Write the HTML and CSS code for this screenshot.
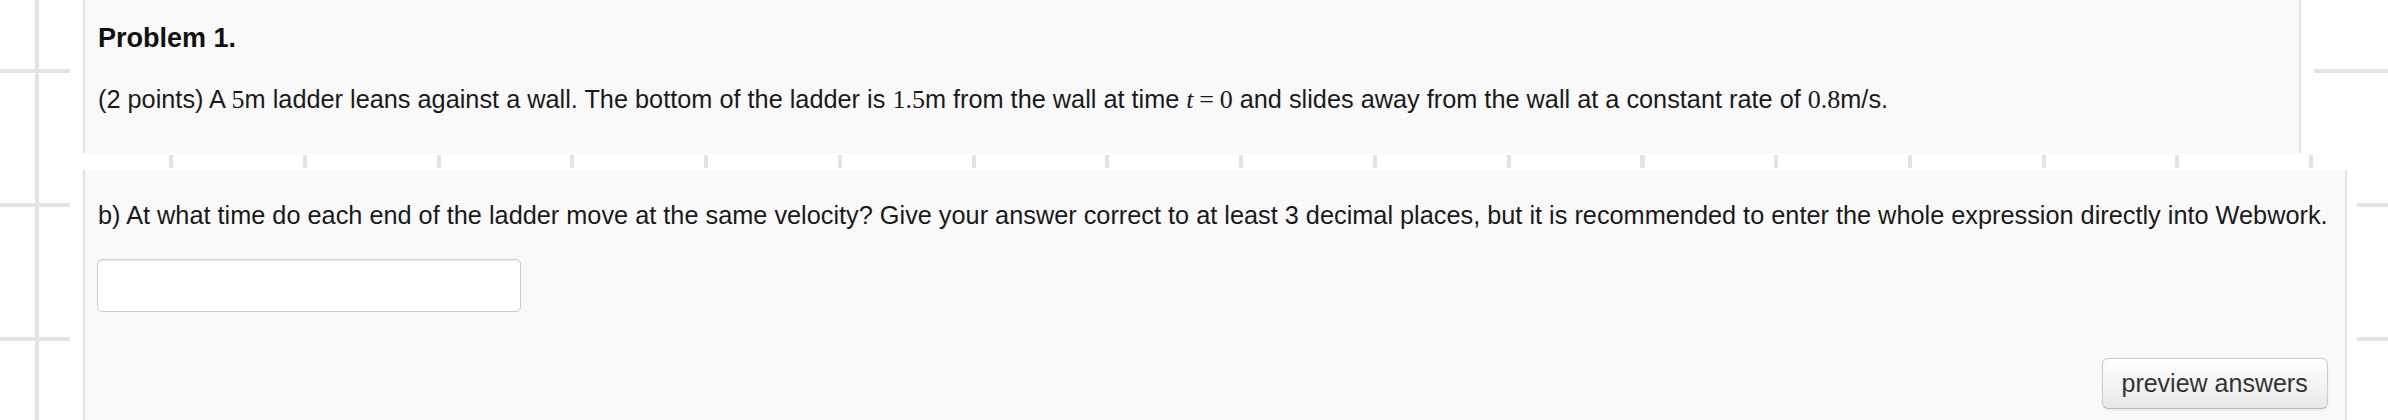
FILE: index.html
```html
<!DOCTYPE html>
<html lang="en">
<head>
<meta charset="utf-8">
<title>Problem 1</title>
<link rel="stylesheet" href="styles.css">
</head>
<body>
  <div class="shot shot-top">
    <section class="panel panel-top">
      <h3 class="problem-title">Problem 1.</h3>
      <p class="problem-text">(2 points) A <span class="math">5</span>m ladder leans against a wall. The bottom of the ladder is <span class="math">1.5</span>m from the wall at time <span class="math"><i>t</i><span class="rel">=</span>0</span> and slides away from the wall at a constant rate of <span class="math">0.8</span>m/s.</p>
    </section>
  </div>
  <div class="gap"></div>
  <div class="shot shot-bottom">
    <section class="panel panel-bottom">
      <p class="part-text">b) At what time do each end of the ladder move at the same velocity? Give your answer correct to at least 3 decimal places, but it is recommended to enter the whole expression directly into Webwork.</p>
      <input class="answer" type="text" aria-label="answer">
      <div class="actions">
        <button class="btn" type="button">preview answers</button>
      </div>
    </section>
  </div>
</body>
</html>
```
FILE: styles.css
```css
html, body {
  margin: 0;
  padding: 0;
}

body {
  height: 420px;
  overflow: hidden;
  display: flex;
  flex-direction: column;
  background-color: #ffffff;
  background-image:
    repeating-linear-gradient(90deg, #e4e4e4 35.5px, #e4e4e4 39.5px, transparent 39.5px, transparent 169.25px),
    repeating-linear-gradient(180deg, #e4e4e4 69px, #e4e4e4 73px, transparent 73px, transparent 203px);
  font-family: "Liberation Sans", Arial, Helvetica, sans-serif;
  color: #1a1a1a;
}

.shot {
  box-sizing: border-box;
  margin-left: 70px;
  background: #ffffff;
}

.shot-top {
  width: 2244px;
  padding: 0 13px 2px;
  flex: none;
}

.gap {
  height: 13px;
  flex: none;
}

.shot-bottom {
  width: 2287px;
  padding: 2px 13px 0;
  flex: 1;
  display: flex;
}

.panel {
  box-sizing: border-box;
  background: #f9f9f9;
  border-left: 2px solid #e2e2e2;
  border-right: 2px solid #e2e2e2;
}

.panel-top {
  height: 153px;
  padding: 22px 17px 0 13px;
}

.panel-bottom {
  flex: 1;
  padding: 30px 17px 0 13px;
}

.problem-title {
  margin: 0;
  font-size: 27px;
  line-height: 32px;
  font-weight: bold;
  color: #111;
}

.problem-text {
  margin: 30px 0 0;
  font-size: 25.3px;
  line-height: 30px;
  white-space: nowrap;
}

.math {
  font-family: "Liberation Serif", "Times New Roman", serif;
  font-size: 26px;
  line-height: 1;
}

.math i {
  font-style: italic;
}

.rel {
  margin: 0 0.22em;
}

.part-text {
  margin: 0;
  font-size: 25.3px;
  line-height: 30px;
  white-space: nowrap;
}

.answer {
  display: block;
  box-sizing: border-box;
  margin: 29px 0 0 -1px;
  width: 424px;
  height: 53px;
  padding: 0 10px;
  background: #ffffff;
  border: 1px solid #cccccc;
  border-radius: 5px;
  box-shadow: inset 0 1px 1px rgba(0, 0, 0, 0.075);
  font-family: inherit;
  font-size: 22px;
}

.actions {
  display: flex;
  justify-content: flex-end;
  margin-top: 46px;
}

.btn {
  box-sizing: border-box;
  width: 226px;
  height: 51px;
  padding: 0;
  font-family: inherit;
  font-size: 25px;
  color: #333333;
  background: linear-gradient(#ffffff, #e8e8e8);
  border: 1px solid #cccccc;
  border-bottom-color: #b8b8b8;
  border-radius: 6px;
  box-shadow: inset 0 1px 0 rgba(255, 255, 255, 0.2), 0 1px 2px rgba(0, 0, 0, 0.08);
}
```
